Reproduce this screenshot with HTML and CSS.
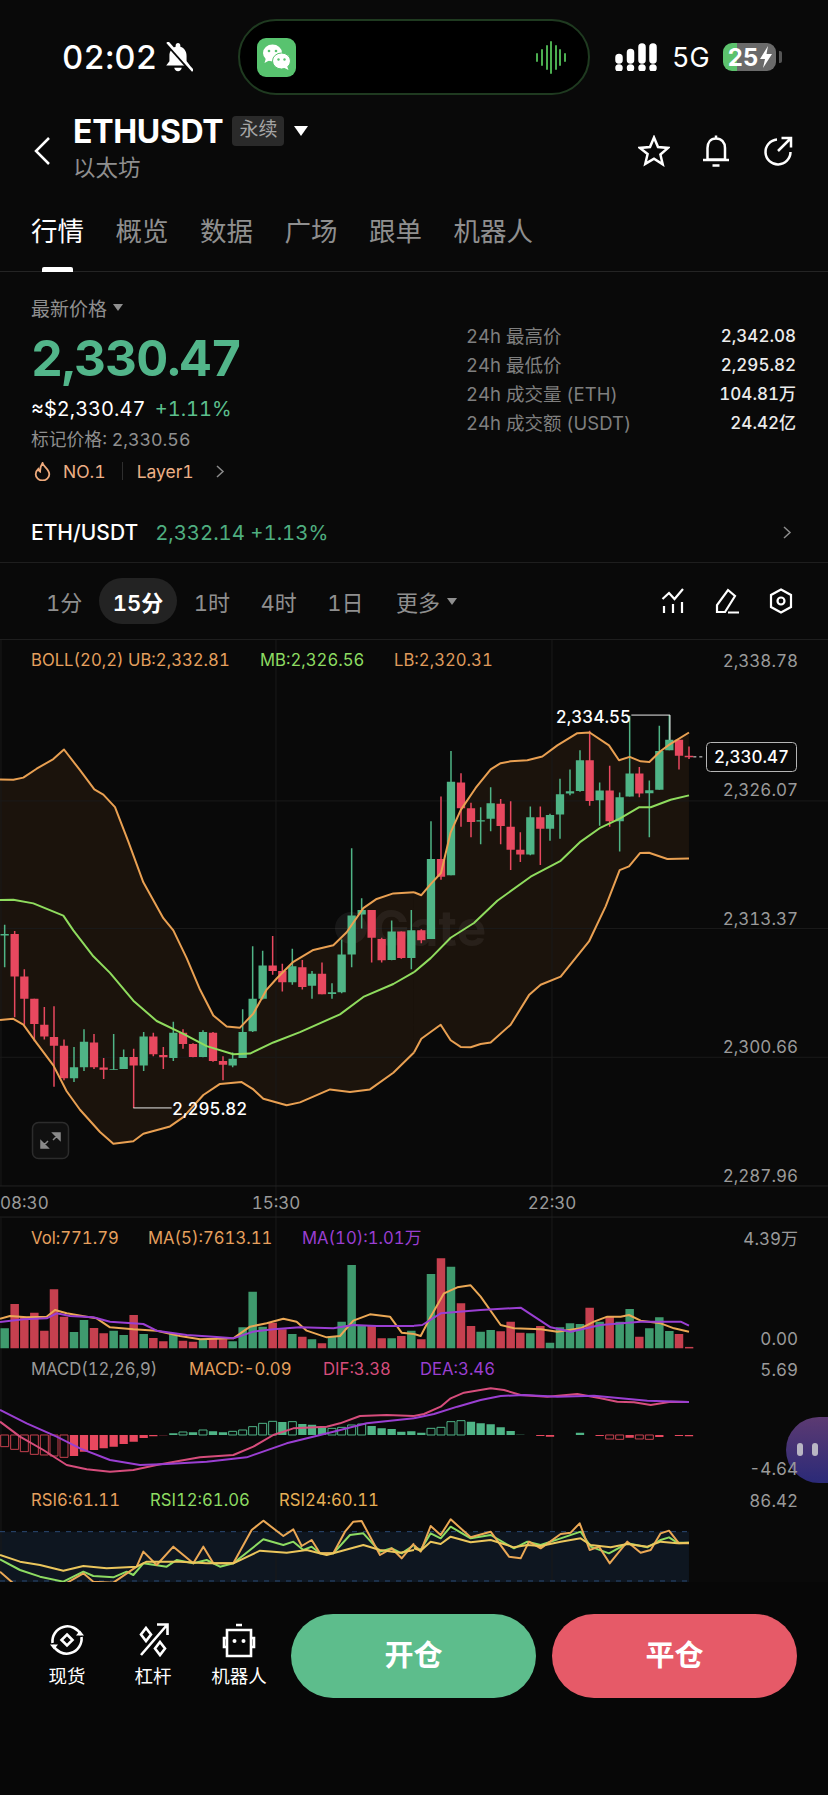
FILE: index.html
```html
<!DOCTYPE html>
<html lang="zh-CN">
<head>
    <meta charset="UTF-8">
    <meta name="viewport" content="width=device-width, initial-scale=1.0">
    <title>ETHUSDT</title>
    <link rel="stylesheet" href="styles.css">
</head>
<body>
    <div class="statusbar">
        <div class="sb-left">
            <span class="sb-time">02:02</span>
            <svg class="ic-mute" viewBox="0 0 28 28"><path class="fill-w" d="M14 1c-1.300 0-2.200.9-2.200 2.200v1.300C8 5.600 6 9 6 13v5l-3 4h22l-3-4v-5c0-4-2-7.400-5.800-8.500V3.200C16.200 1.900 15.300 1 14 1z"/><path class="fill-w" d="M10.500 24c.4 2 1.700 3.200 3.500 3.200s3.100-1.200 3.500-3.200z"/><path class="mute-cut" d="M3 1l24 27"/><path class="mute-line" d="M4 0l24 27"/></svg>
        </div>
        <div class="island">
            <svg class="ic-wechat" viewBox="0 0 39 39"><rect class="wx-bg" width="39" height="39" rx="9"/><ellipse class="fill-w" cx="15.500" cy="15" rx="9.500" ry="8.500"/><path class="fill-w" d="M9 20l-1.500 5 5.500-3z"/><ellipse class="wx-bg wx-ring" cx="24.500" cy="23" rx="9" ry="8"/><path class="fill-w" d="M30 28l1.500 4-5-2.500z"/><circle class="wx-eye" cx="12" cy="13" r="1.300"/><circle class="wx-eye" cx="19" cy="13" r="1.300"/><circle class="wx-eye" cx="21.500" cy="21.500" r="1.200"/><circle class="wx-eye" cx="27.500" cy="21.500" r="1.200"/></svg>
            <svg class="ic-voice" viewBox="0 0 30 33"><path class="voice" d="M1 13v7M6 9v15M11 5v23M15 1v31M20 5v23M24 9v15M29 13v7"/></svg>
        </div>
        <div class="sb-right">
            <svg class="ic-signal" viewBox="0 0 42 28"><path class="signal" d="M4 14.500v2.500M15.500 9.500v7.500M27 4v13M38 4v13M4 25v0M15.500 25v0M27 25v0M38 25v0"/></svg>
            <span class="sb-5g">5G</span>
            <div class="battery"><span>25</span><svg class="ic-bolt" viewBox="0 0 12 22"><path class="fill-w" d="M8 0L0 13h5l-2 9 9-14H6.500z"/></svg></div>
            <i class="battery-cap"></i>
        </div>
    </div>

    <div class="header">
        <svg class="ic-back" viewBox="0 0 16 28"><path class="line-w" d="M15 1L2 14l13 13"/></svg>
        <div class="title">
            <div class="title-row">
                <span class="symbol">ETHUSDT</span>
                <span class="badge">永续</span>
                <i class="caret"></i>
            </div>
            <div class="subname">以太坊</div>
        </div>
        <div class="header-icons">
            <svg class="ic-head" viewBox="0 0 32 32"><path class="line-w" d="M16 2.500l4 9.500 10 .9-7.600 6.600 2.300 9.800L16 23.600l-8.700 5.200 2.300-9.800L2 12.900l10-.9z"/></svg>
            <svg class="ic-head" viewBox="0 0 32 32"><path class="line-w" d="M16 3.500c-5.500 0-8.500 4-8.500 9.500v11.500H25V13c0-5.500-3.500-9.500-9-9.500zM16 .5v3M3 25h26M12.500 30.500h7"/></svg>
            <svg class="ic-head" viewBox="0 0 32 32"><path class="line-w" d="M15 4.500A12.500 12.500 0 1 0 28.500 17M16 16L28.500 3.500M19.500 3h9.500v9.500"/></svg>
        </div>
    </div>

    <div class="tabs">
        <span class="tab active">行情</span>
        <span class="tab">概览</span>
        <span class="tab">数据</span>
        <span class="tab">广场</span>
        <span class="tab">跟单</span>
        <span class="tab">机器人</span>
    </div>

    <div class="price-block">
        <div class="price-left">
            <div class="price-label">最新价格 <i class="caret-sm"></i></div>
            <div class="price-big">2,330.47</div>
            <div class="price-usd">≈$2,330.47 <span class="green">+1.11%</span></div>
            <div class="price-mark">标记价格: 2,330.56</div>
            <div class="price-tags">
                <svg class="ic-flame" viewBox="0 0 17 19"><path class="line-o" d="M8.500 1c.8 3.700 6.800 6.300 6.800 11.300a6.800 6.200 0 0 1-13.600 0c0-2.500 1.200-4.100 2.600-5.300.3 1.500.9 2.300 1.800 2.700C6 7 7 3.300 8.500 1z"/></svg>
                <span>NO.1</span>
                <i class="tag-sep"></i>
                <span>Layer1</span>
                <svg class="ic-more" viewBox="0 0 9 13"><path class="line-g" d="M1 1l6 5.500L1 12"/></svg>
            </div>
        </div>
        <div class="stats">
            <div class="stat"><span>24h 最高价</span><b>2,342.08</b></div>
            <div class="stat"><span>24h 最低价</span><b>2,295.82</b></div>
            <div class="stat"><span>24h 成交量 (ETH)</span><b>104.81万</b></div>
            <div class="stat"><span>24h 成交额 (USDT)</span><b>24.42亿</b></div>
        </div>
    </div>

    <div class="spot-row">
        <span class="spot-name">ETH/USDT</span>
        <span class="spot-val">2,332.14 +1.13%</span>
        <svg class="ic-more-r" viewBox="0 0 9 13"><path class="line-g" d="M1 1l6 5.500L1 12"/></svg>
    </div>

    <div class="toolbar">
        <span class="tf">1分</span>
        <span class="tf active">15分</span>
        <span class="tf">1时</span>
        <span class="tf">4时</span>
        <span class="tf">1日</span>
        <span class="tf tf-more">更多 <i class="caret-sm"></i></span>
        <div class="tool-icons">
            <svg class="ic-tool" viewBox="0 0 24 26"><path class="line-w2" d="M1.500 11L8 5l5.500 6L22 1M3 18v7M12 16v9M21 14v11"/></svg>
            <svg class="ic-tool" viewBox="0 0 24 26"><path class="line-w2" d="M2 24v-7L13 2l7 6-10 16zM13 24.500h11"/></svg>
            <svg class="ic-tool" viewBox="0 0 24 26"><path class="line-w2" d="M12 1.500l10 5.500v12l-10 5.500L2 19V7z"/><circle class="line-w2" cx="12" cy="13" r="3.500"/></svg>
        </div>
    </div>

    <svg class="chart-main" viewBox="0 0 828 578">
        <g transform="scale(.33333 .3699)">
            <polygon class="band" points="0,377 40,378 70,372 110,348 160,322 192,296 240,352 283,404 310,418 345,452 385,545 430,655 490,752 520,785 560,860 600,945 640,1015 680,1045 720,1048 760,1010 800,945 830,915 880,870 940,838 1000,825 1040,790 1090,725 1130,700 1180,685 1242,682 1242,1115 1180,1170 1110,1215 1050,1222 990,1215 900,1250 860,1258 790,1240 760,1215 725,1195 660,1200 610,1230 550,1290 510,1315 430,1335 400,1355 340,1362 300,1330 240,1270 200,1220 160,1150 110,1090 70,1040 40,1024 0,1027"/>
            <polygon class="band" transform="translate(1242 0)" points="0,682 22,690 50,660 81,630 110,520 140,460 185,400 230,350 260,333 290,328 340,325 385,315 430,285 490,252 527,250 585,285 615,325 647,316 680,328 706,330 740,300 766,283 825,250 825,591 760,592 705,575 678,576 645,612 617,622 575,720 525,815 440,910 380,932 345,960 290,1040 230,1088 200,1092 170,1101 140,1100 110,1082 80,1040 22,1078 0,1115"/>
            <path class="grid" d="M0 435H2484M0 780H2484M0 1128H2484M3 0V1476M828 0V1568M1656 0V1568"/>
            <path class="grid-strong" d="M0 1476H2484M0 1560H2484"/>
        </g>
        <circle class="watermark" cx="351" cy="288" r="16"/>
        <text class="watermark" x="372" y="306">Gate</text>
        <g transform="scale(.33333 .3699)">
            <path class="wick up" d="M14 770V885M222 1100V1195M252 1052V1165M341 1065V1162M371 1107V1160M431 1060V1165M520 1032V1138M609 1055V1128M698 1115V1155M728 998V1130M758 828V1060M788 840V972M877 835V932M936 895V970M996 928V970M1025 810V955M1055 563V885M1085 698V780M1175 758V866M1234 730V890"/>
            <path class="body up" d="M14 795V799M222 1155V1185M252 1086V1155M341 1160V1162M371 1127V1160M431 1072V1150M520 1062V1130M609 1060V1127M698 1132V1150M728 1060V1130M758 970V1058M788 880V970M877 882V925M936 902V935M996 952V957M1025 850V952M1055 745V850M1085 730V742M1175 788V865M1234 785V860"/>
            <path class="wick down" d="M44 787V1020M73 890V1040M103 970V1085M133 992V1080M162 990V1208M192 1080V1190M282 1065V1160M311 1130V1187M401 1105V1265M460 1062V1125M490 1100V1160M549 1052V1105M579 1090V1128M639 1060V1140M669 1125V1190M818 800V905M847 875V950M907 865V945M966 872V958M1115 730V872M1145 805V872M1204 788V862"/>
            <path class="body down" d="M44 795V910M73 910V970M103 970V1038M133 1040V1072M162 1073V1097M192 1097V1185M282 1088V1155M311 1156V1162M401 1127V1150M460 1072V1120M490 1122V1128M549 1062V1092M579 1092V1127M639 1062V1138M669 1138V1148M818 880V895M847 895V925M907 885V938M966 902V958M1115 730V805M1145 808V866M1204 788V860"/>
            <polyline class="ln boll" points="0,377 40,378 70,372 110,348 160,322 192,296 240,352 283,404 310,418 345,452 385,545 430,655 490,752 520,785 560,860 600,945 640,1015 680,1045 720,1048 760,1010 800,945 830,915 880,870 940,838 1000,825 1040,790 1090,725 1130,700 1180,685 1242,682"/>
            <polyline class="ln boll" points="0,1027 40,1024 70,1040 110,1090 160,1150 200,1220 240,1270 300,1330 340,1362 400,1355 430,1335 510,1315 550,1290 610,1230 660,1200 725,1195 760,1215 790,1240 860,1258 900,1250 990,1215 1050,1222 1110,1215 1180,1170 1242,1115"/>
            <polyline class="ln mb" points="0,703 40,702 100,712 190,745 220,785 280,855 330,900 400,975 470,1030 550,1065 620,1098 700,1120 750,1118 820,1088 900,1060 1020,1012 1090,965 1180,930 1242,898"/>
            <path class="mark" d="M400 1265H515"/>
            <g transform="translate(1242 0)">
                <path class="wick up" d="M51 490V808M111 300V636M200 452V552M230 398V517M349 450V582M408 470V543M438 375V537M468 350V420M498 298V410M557 385V502M617 412V572M647 205V423M706 380V533M736 232V405M766 203V298"/>
                <path class="body up" d="M51 592V808M111 383V636M200 487V491M230 441V483M349 479V580M408 473V510M438 417V472M468 409V415M498 325V408M557 407V433M617 425V490M647 361V423M706 406V414M736 300V405M766 270V298"/>
                <path class="wick down" d="M22 782V820M81 423V648M141 360V505M171 440V533M260 430V552M290 436V622M319 520V600M379 450V608M527 245V448M587 340V505M676 343V425M795 270V350M825 288V322"/>
                <path class="body down" d="M22 785V812M81 592V640M141 385V455M171 455V492M260 443V503M290 505V567M319 567V580M379 479V510M527 325V435M587 407V490M676 361V415M795 270V313"/>
                <path class="doji" d="M812 315H838"/>
                <polyline class="ln boll" points="0,682 22,690 50,660 81,630 110,520 140,460 185,400 230,350 260,333 290,328 340,325 385,315 430,285 490,252 527,250 585,285 615,325 647,316 680,328 706,330 740,300 766,283 825,250"/>
                <polyline class="ln boll" points="0,1115 22,1078 80,1040 110,1082 140,1100 170,1101 200,1092 230,1088 290,1040 345,960 380,932 440,910 525,815 575,720 617,622 645,612 678,576 705,575 760,592 825,591"/>
                <polyline class="ln mb" points="0,898 50,860 110,805 180,765 250,705 350,640 440,597 500,545 560,507 617,483 676,452 710,452 770,432 825,420"/>
                <path class="mark" d="M652 203H768V270"/>
                <path class="mark dash" d="M838 316H872"/>
            </g>
        </g>
        <text class="lg c-boll" x="31" y="26">BOLL(20,2) UB:2,332.81</text>
        <text class="lg c-mb" x="260" y="26">MB:2,326.56</text>
        <text class="lg c-lb" x="394" y="26">LB:2,320.31</text>
        <text class="ax" x="798" y="26.500">2,338.78</text>
        <text class="ax" x="798" y="155.500">2,326.07</text>
        <text class="ax" x="798" y="284.500">2,313.37</text>
        <text class="ax" x="798" y="412.500">2,300.66</text>
        <text class="ax" x="798" y="541.500">2,287.96</text>
        <text class="tm tm-start" x="0" y="568.500">08:30</text>
        <text class="tm" x="276" y="568.500">15:30</text>
        <text class="tm" x="552" y="568.500">22:30</text>
        <text class="hilo hilo-end" x="631" y="82.500">2,334.55</text>
        <text class="hilo" x="172" y="474.500">2,295.82</text>
        <rect class="pricebox" x="706.500" y="102.500" width="90" height="29" rx="4"/>
        <text class="hilo hilo-mid" x="751.500" y="123">2,330.47</text>
        <rect class="expand" x="32.500" y="482.500" width="36" height="36" rx="6"/>
        <path class="expand-ic" d="M43 506l5-5M58 495l-5 5M41 508v-7l7 7zM60 493v7l-7-7z"/>
    </svg>

    <svg class="chart-sub" viewBox="0 0 828 364">
        <defs>
            <linearGradient id="bubble" x1="0" y1="0" x2="0" y2="1">
                <stop offset="0" stop-color="#5c3a72"/>
                <stop offset="1" stop-color="#2b2a78"/>
            </linearGradient>
        </defs>
        <g transform="scale(.33333) translate(0 -24)">
            <rect class="rsi-bg" x="0" y="965" width="2067" height="151"/>
            <path class="grid" d="M3 24V1116M828 24V1116M1656 24V1116"/>
            <path class="rsi-dash" d="M0 965H2067M0 1113H2067"/>
            <path class="vol up-d" d="M14 415V355M222 415V366M252 415V330M341 415V362M371 415V375M431 415V372M520 415V370M609 415V388M698 415V394M728 415V352M758 415V245M788 415V350M877 415V372M936 415V388M996 415V380M1025 415V335M1055 415V165M1085 415V345M1175 415V385M1234 415V362"/>
            <path class="vol down-d" d="M44 415V282M73 415V320M103 415V308M133 415V362M162 415V238M192 415V320M282 415V354M311 415V370M401 415V315M460 415V384M490 415V394M549 415V392M579 415V395M639 415V385M669 415V388M818 415V338M847 415V358M907 415V380M966 415V400M1115 415V348M1145 415V385M1204 415V378"/>
            <polyline class="ln c2-o" points="0,326 30,318 80,322 140,320 165,300 200,310 260,320 290,325 330,352 400,358 470,362 540,378 600,388 700,385 750,350 800,340 850,326 890,335 920,362 980,382 1020,378 1060,332 1110,313 1170,320 1205,368 1242,372"/>
            <polyline class="ln c2-p" points="0,336 70,328 140,325 170,310 210,318 280,322 330,335 430,342 470,362 560,375 640,380 700,385 760,365 820,358 900,352 1000,355 1060,345 1130,348 1242,348"/>
            <path class="bar up" d="M520 675V670M579 675V667M639 675V664M669 675V667M847 675V636M907 675V642M936 675V644M966 675V652M1115 675V648M1145 675V655M1175 675V657M1204 675V665M1234 675V664"/>
            <path class="bar down" d="M222 675V738M252 675V725M282 675V720M311 675V715M341 675V710M371 675V702M401 675V695M431 675V684M460 675V679M490 675V676"/>
            <path class="hollow h-down" d="M2 675h24v35h-24zM32 675h24v43h-24zM61 675h24v50h-24zM91 675h24v58h-24zM121 675h24v60h-24zM150 675h24v63h-24zM180 675h24v67h-24z"/>
            <path class="hollow h-up" d="M537 675h24v-9h-24zM597 675h24v-15h-24zM686 675h24v-11h-24zM716 675h24v-15h-24zM746 675h24v-25h-24zM776 675h24v-35h-24zM806 675h24v-41h-24zM865 675h24v-40h-24zM984 675h24v-20h-24zM1013 675h24v-23h-24zM1043 675h24v-30h-24zM1073 675h24v-33h-24z"/>
            <polyline class="ln c-dif" points="0,635 60,680 130,720 200,765 260,778 330,785 400,780 470,765 540,752 600,742 700,735 760,710 820,675 880,655 980,650 1020,640 1080,618 1160,615 1242,618"/>
            <polyline class="ln c2-p" points="0,600 80,640 170,680 240,715 330,750 420,765 500,762 620,755 740,742 860,700 1000,665 1100,640 1242,625"/>
            <polyline class="ln c-r12" points="0,1048 60,1080 120,1100 190,1115 250,1085 280,1098 340,1102 380,1085 400,1095 430,1060 500,1070 530,1050 580,1060 620,1050 660,1070 700,1060 790,988 850,1005 880,995 910,1020 935,1010 960,1030 1000,1030 1050,975 1090,970 1140,1025 1175,1015 1205,1030 1242,1005"/>
            <polyline class="ln c2-o" points="0,1085 40,1120 120,1125 190,1125 250,1090 280,1115 340,1118 410,1070 430,1025 470,1065 520,1010 580,1060 610,1010 640,1060 700,1060 755,960 790,932 850,978 880,958 905,1008 935,990 960,1030 1000,1030 1035,965 1060,935 1085,933 1140,1035 1175,1015 1205,1045 1242,1000"/>
            <polyline class="ln c-r24" points="0,1035 60,1055 120,1065 190,1082 250,1068 320,1075 410,1070 440,1055 540,1055 620,1060 700,1060 780,1022 860,1028 920,1020 980,1035 1090,1005 1140,1020 1200,1028 1242,1020"/>
            <g transform="translate(1242 0)">
                <path class="vol up-d" d="M51 415V192M111 415V170M200 415V365M230 415V360M349 415V370M408 415V398M438 415V352M468 415V340M498 415V342M557 415V335M617 415V335M647 415V297M706 415V355M736 415V322M766 415V363"/>
                <path class="vol down-d" d="M22 415V388M81 415V145M141 415V280M171 415V348M260 415V364M290 415V335M319 415V368M379 415V348M527 415V293M587 415V320M676 415V380M795 415V372"/>
                <path class="thin-r" d="M813 413H838"/>
                <polyline class="ln c2-o" points="0,372 20,378 50,320 90,250 130,232 170,226 200,260 260,345 300,355 380,358 430,365 500,355 540,335 580,320 620,320 645,315 680,332 740,340 780,355 825,365"/>
                <polyline class="ln c2-p" points="0,347 25,345 80,310 200,300 320,293 410,352 470,365 560,345 680,335 800,335 825,347"/>
                <path class="bar up" d="M171 675V635M200 675V640M230 675V643M260 675V652M290 675V663M22 675V668M319 675V674M498 675V668"/>
                <path class="bar down" d="M379 675V678M408 675V680M557 675V678M647 675V683M736 675V681M795 675V678M825 675V679"/>
                <path class="hollow h-up" d="M39 675h24v-20h-24zM69 675h24v-23h-24zM99 675h24v-40h-24zM129 675h24v-43h-24z"/>
                <path class="hollow h-down" d="M575 675h24v12h-24zM605 675h24v13h-24zM664 675h24v12h-24zM694 675h24v13h-24z"/>
                <polyline class="ln c-dif" points="0,618 30,612 80,590 110,565 150,548 230,535 270,540 320,555 400,560 490,552 560,565 610,575 660,577 710,585 770,575 825,576"/>
                <polyline class="ln c2-p" points="0,625 60,612 130,590 200,570 260,558 330,555 430,560 540,557 620,565 700,572 825,576"/>
                <polyline class="ln c-r12" points="0,1010 20,1020 50,970 80,985 110,950 170,985 230,975 300,1015 340,995 380,1005 440,985 500,965 530,1010 585,1030 640,1000 700,1012 740,990 765,982 790,998 825,998"/>
                <polyline class="ln c2-o" points="0,1005 20,1025 50,948 80,975 110,928 170,982 230,965 285,1040 320,1045 345,995 380,1015 440,972 470,968 497,940 527,1020 555,1010 587,1060 640,995 680,1028 710,1020 740,970 765,962 795,1000 825,1000"/>
                <polyline class="ln c-r24" points="0,1015 20,1022 50,995 80,1002 110,980 170,997 230,990 300,1012 340,1005 380,1008 440,995 500,985 530,1005 590,1012 640,1002 700,1010 740,995 790,1000 825,998"/>
            </g>
        </g>
        <path class="bubble" d="M828 199h-9a33 33 0 0 0 0 66h9z"/>
        <rect class="bubble-dot" x="797" y="225" width="6" height="13" rx="3"/>
        <rect class="bubble-dot" x="812" y="225" width="6" height="13" rx="3"/>
        <text class="lg c-boll" x="31" y="25.500">Vol:771.79</text>
        <text class="lg c-boll" x="148" y="25.500">MA(5):7613.11</text>
        <text class="lg c-p" x="302" y="25.500">MA(10):1.01万</text>
        <text class="lg c-grey" x="31" y="156.500">MACD(12,26,9)</text>
        <text class="lg c-boll" x="189" y="156.500">MACD:-0.09</text>
        <text class="lg c-pink" x="323" y="156.500">DIF:3.38</text>
        <text class="lg c-p" x="420" y="156.500">DEA:3.46</text>
        <text class="lg c-boll" x="31" y="287.500">RSI6:61.11</text>
        <text class="lg c-mb" x="150" y="287.500">RSI12:61.06</text>
        <text class="lg c-y" x="279" y="287.500">RSI24:60.11</text>
        <text class="ax" x="798" y="26.500">4.39万</text>
        <text class="ax" x="798" y="126.500">0.00</text>
        <text class="ax" x="798" y="157.500">5.69</text>
        <text class="ax" x="798" y="256.500">-4.64</text>
        <text class="ax" x="798" y="288.500">86.42</text>
    </svg>

    <div class="bottom">
        <div class="nav-item">
            <svg class="ic-nav" viewBox="0 0 36 36"><path class="line-w3" d="M3.500 21A15 15 0 0 1 32 13M32.500 15A15 15 0 0 1 4 23"/><path class="fill-w" d="M27 13.500h8l-4-5zM9 22.500H1l4 5z"/><path class="line-w3" d="M18 12.500l5.500 5.500-5.500 5.500-5.500-5.500z"/></svg>
            <span>现货</span>
        </div>
        <div class="nav-item">
            <svg class="ic-nav" viewBox="0 0 36 36"><path class="line-w3" d="M6 33L32 3M22 2.500h10.500v10.500M11 6l5 6.500-5 6.500-5-6.500zM25 20l5 6.500-5 6.500-5-6.500z"/></svg>
            <span>杠杆</span>
        </div>
        <div class="nav-item">
            <svg class="ic-nav" viewBox="0 0 36 36"><path class="line-w3" d="M6 8h24v26H6zM15 3h6M6 16H3v9h3M30 16h3v9h-3"/><circle class="fill-w" cx="13.500" cy="19" r="2"/><circle class="fill-w" cx="22.500" cy="19" r="2"/></svg>
            <span>机器人</span>
        </div>
        <div class="trade-btn open">开仓</div>
        <div class="trade-btn close">平仓</div>
    </div>
</body>
</html>
```

FILE: styles.css
```css
* {
    box-sizing: border-box;
}
body {
    margin: 0;
    width: 828px;
    height: 1795px;
    overflow: hidden;
    background: #090909;
    color: #fff;
    font-family: Inter, "Noto Sans CJK SC", sans-serif;
    font-variant-numeric: tabular-nums;
}
svg {
    display: block;
    flex: none;
}
i {
    display: block;
    flex: none;
}

/* status bar */
.statusbar {
    display: flex;
    align-items: center;
    height: 100px;
    padding-top: 19px;
    padding-bottom: 5px;
}
.sb-left {
    display: flex;
    align-items: center;
    gap: 6px;
    width: 238px;
    padding-left: 62px;
}
.sb-time {
    font-size: 33px;
    font-weight: 500;
    letter-spacing: .2px;
}
.ic-mute {
    width: 30px;
    height: 30px;
}
.mute-cut {
    fill: none;
    stroke: #090909;
    stroke-width: 3;
}
.mute-line {
    fill: none;
    stroke: #fff;
    stroke-width: 2.500;
}
.island {
    display: flex;
    align-items: center;
    justify-content: space-between;
    width: 352px;
    height: 76px;
    padding: 0 22px 0 17px;
    background: #000;
    border: 2px solid #1f3a20;
    border-radius: 38px;
}
.ic-wechat {
    width: 39px;
    height: 39px;
}
.wx-bg {
    fill: #58c36f;
}
.wx-ring {
    stroke: #58c36f;
    stroke-width: 1;
    fill: #fff;
}
.wx-eye {
    fill: #58c36f;
}
.ic-voice {
    width: 30px;
    height: 33px;
}
.voice {
    fill: none;
    stroke: #4cae50;
    stroke-width: 2;
    stroke-linecap: round;
}
.sb-right {
    display: flex;
    align-items: center;
    margin-left: 25px;
}
.ic-signal {
    width: 42px;
    height: 28px;
    margin-right: 15px;
}
.signal {
    fill: none;
    stroke: #fff;
    stroke-width: 7.500;
    stroke-linecap: round;
}
.sb-5g {
    width: 36px;
    margin-right: 15px;
    font-size: 27px;
    font-weight: 400;
}
.battery {
    display: flex;
    align-items: center;
    justify-content: center;
    gap: 1px;
    width: 53px;
    height: 28px;
    background: linear-gradient(90deg, #5cc26d 27%, #6a6a6a 27%);
    border-radius: 9px;
    font-size: 24px;
    font-weight: 700;
}
.ic-bolt {
    width: 12px;
    height: 22px;
}
.battery-cap {
    width: 3px;
    height: 12px;
    margin-left: 3px;
    background: #555;
    border-radius: 0 2px 2px 0;
}
.fill-w {
    fill: #fff;
}
.line-w {
    fill: none;
    stroke: #fff;
    stroke-width: 2.500;
}
.line-w2 {
    fill: none;
    stroke: #fff;
    stroke-width: 2.200;
}
.line-w3 {
    fill: none;
    stroke: #fff;
    stroke-width: 2.600;
}
.line-o {
    fill: none;
    stroke: #eeaa7c;
    stroke-width: 1.800;
}
.line-g {
    fill: none;
    stroke: #8c8c8c;
    stroke-width: 1.500;
}

/* header */
.header {
    display: flex;
    align-items: flex-start;
    height: 90px;
    padding: 16px 34px 0 34px;
}
.ic-back {
    width: 16px;
    height: 28px;
    margin-top: 21px;
}
.title {
    margin-left: 23px;
}
.title-row {
    display: flex;
    align-items: center;
    height: 30px;
}
.symbol {
    font-size: 32px;
    font-weight: 700;
    letter-spacing: -.3px;
}
.badge {
    margin-left: 9px;
    padding: 0 7px;
    height: 30px;
    line-height: 28px;
    background: #2a2a2a;
    border-radius: 4px;
    color: #a5a5a5;
    font-size: 19px;
}
.caret {
    width: 0;
    height: 0;
    margin-left: 10px;
    border-left: 7px solid transparent;
    border-right: 7px solid transparent;
    border-top: 10px solid #fff;
}
.subname {
    margin-top: 10px;
    color: #8f8f8f;
    font-size: 22.500px;
    line-height: 24px;
}
.header-icons {
    display: flex;
    gap: 30px;
    margin-left: auto;
    margin-top: 19px;
}
.ic-head {
    width: 32px;
    height: 32px;
}

/* tabs */
.tabs {
    display: flex;
    gap: 31.500px;
    height: 82px;
    padding: 0 31px;
    border-bottom: 1px solid #242424;
}
.tab {
    position: relative;
    padding-top: 26px;
    color: #8f8f8f;
    font-size: 26.500px;
    line-height: 30px;
}
.tab.active {
    color: #fff;
}
.tab.active::after {
    content: "";
    position: absolute;
    left: 11px;
    right: 11px;
    bottom: -1px;
    height: 5px;
    background: #fff;
    border-radius: 2px 2px 0 0;
}

/* price block */
.price-block {
    display: flex;
    height: 230px;
    padding: 0 32px 0 31px;
}
.price-left {
    padding-top: 25px;
}
.price-label {
    display: flex;
    align-items: center;
    gap: 6px;
    height: 20px;
    color: #8f8f8f;
    font-size: 19px;
}
.caret-sm {
    width: 0;
    height: 0;
    border-left: 5px solid transparent;
    border-right: 5px solid transparent;
    border-top: 7px solid #8f8f8f;
}
.price-big {
    height: 50px;
    margin-top: 16px;
    color: #52b58a;
    font-size: 49.500px;
    font-weight: 700;
    line-height: 50px;
    letter-spacing: -1px;
}
.price-usd {
    height: 24px;
    margin-top: 14px;
    font-size: 20px;
    line-height: 24px;
}
.green {
    margin-left: 4px;
    color: #5cbf8d;
}
.price-mark {
    height: 22px;
    margin-top: 8px;
    color: #8f8f8f;
    font-size: 17.800px;
    line-height: 22px;
}
.price-tags {
    display: flex;
    align-items: center;
    height: 22px;
    margin-top: 9px;
    color: #eeb086;
    font-size: 17.500px;
}
.ic-flame {
    width: 17px;
    height: 19px;
    margin: 0 12px 0 3px;
}
.tag-sep {
    width: 1px;
    height: 18px;
    margin: 0 14px 0 16px;
    background: #2e2e2e;
}
.ic-more {
    width: 9px;
    height: 13px;
    margin-left: 22px;
}
.stats {
    width: 330px;
    margin-left: auto;
    padding-top: 50px;
}
.stat {
    display: flex;
    justify-content: space-between;
    height: 29px;
    color: #7f7f7f;
    font-size: 18.500px;
    line-height: 29px;
}
.stat b {
    color: #ececec;
    font-size: 17px;
    font-weight: 500;
}

/* spot row */
.spot-row {
    display: flex;
    align-items: center;
    height: 61px;
    padding: 0 36px 0 31px;
    border-bottom: 1px solid #1e1e1e;
    font-size: 21px;
}
.spot-name {
    font-weight: 500;
}
.spot-val {
    margin-left: 17px;
    color: #4fae80;
    font-size: 20.300px;
}
.ic-more-r {
    width: 9px;
    height: 13px;
    margin-left: auto;
}

/* timeframe toolbar */
.toolbar {
    display: flex;
    align-items: center;
    gap: 2.500px;
    height: 77px;
    padding: 0 35px 0 32px;
    border-bottom: 1px solid #1e1e1e;
}
.tf {
    display: flex;
    align-items: center;
    gap: 7px;
    height: 46px;
    padding: 0 14px;
    color: #8f8f8f;
    font-size: 22px;
    border-radius: 23px;
}
.tf.active {
    background: #232323;
    color: #fff;
    font-weight: 600;
}
.tf-more {
    margin-left: 2px;
}
.tool-icons {
    display: flex;
    gap: 30px;
    margin-left: auto;
}
.ic-tool {
    width: 24px;
    height: 26px;
}

/* charts */
.chart-main {
    width: 828px;
    height: 578px;
}
.chart-sub {
    width: 828px;
    height: 364px;
}
.band {
    fill: #1b130c;
}
.grid {
    fill: none;
    stroke: #1a1a1a;
    stroke-width: 1;
    vector-effect: non-scaling-stroke;
}
.grid-strong {
    fill: none;
    stroke: #222;
    stroke-width: 1;
    vector-effect: non-scaling-stroke;
}
.watermark {
    fill: rgba(255, 255, 255, .06);
    font-size: 50px;
    font-weight: 700;
}
.wick, .body, .vol, .bar, .ln, .mark, .hollow, .doji, .thin-r {
    fill: none;
    vector-effect: non-scaling-stroke;
}
.wick {
    stroke-width: 1.500;
}
.body {
    stroke-width: 8.300;
}
.up {
    stroke: #4fb486;
}
.down {
    stroke: #e8485f;
}
.doji {
    stroke: #e8485f;
    stroke-width: 1.500;
}
.ln {
    stroke-width: 2;
    stroke-linejoin: round;
}
.boll {
    stroke: #e9a052;
}
.mb {
    stroke: #8fdc5e;
}
.mark {
    stroke: #e8e8e8;
    stroke-width: 1;
}
.dash {
    stroke-dasharray: 3 3;
}
.lg {
    font-size: 16.700px;
}
.c-boll {
    fill: #e5a05e;
}
.c-mb {
    fill: #8ddc62;
}
.c-lb {
    fill: #df9a5c;
}
.c-p {
    fill: #9a3fd2;
}
.c-grey {
    fill: #9a9a9a;
}
.c-pink {
    fill: #d64d7c;
}
.c-y {
    fill: #e6b055;
}
.ax {
    fill: #9a9a9a;
    font-size: 17px;
    text-anchor: end;
}
.tm {
    fill: #9a9a9a;
    font-size: 17px;
    text-anchor: middle;
}
.tm-start {
    text-anchor: start;
}
.hilo {
    fill: #fff;
    font-size: 17px;
    font-weight: 500;
}
.hilo-end {
    text-anchor: end;
}
.hilo-mid {
    text-anchor: middle;
}
.pricebox {
    fill: #090909;
    stroke: #b5b5b5;
    stroke-width: 1;
}
.expand {
    fill: #101010;
    stroke: #2c2c2c;
    stroke-width: 1.500;
}
.expand-ic {
    fill: #8a8a8a;
    stroke: #8a8a8a;
    stroke-width: 1.500;
}

/* lower panels */
.vol {
    stroke-width: 8.500;
}
.up-d {
    stroke: #3f9a6e;
}
.down-d {
    stroke: #c6404f;
}
.thin-r {
    stroke: #c6404f;
    stroke-width: 1.500;
}
.bar {
    stroke-width: 8.300;
}
.hollow {
    stroke-width: 1;
}
.h-up {
    stroke: #4fb486;
}
.h-down {
    stroke: #c6404f;
}
.c2-o {
    stroke: #eba855;
}
.c2-p {
    stroke: #9a3fd2;
}
.c-dif {
    stroke: #d64d7c;
}
.c-r12 {
    stroke: #8ddc62;
}
.c-r24 {
    stroke: #ebc65c;
}
.rsi-bg {
    fill: #0e1620;
}
.rsi-dash {
    fill: none;
    stroke: #2b4a73;
    stroke-width: 1;
    stroke-dasharray: 5 6;
    vector-effect: non-scaling-stroke;
}
.bubble {
    fill: url(#bubble);
}
.bubble-dot {
    fill: #b9b6c4;
}

/* bottom actions */
.bottom {
    display: flex;
    align-items: flex-start;
    height: 213px;
    padding: 32px 31px 0 24px;
    background: #070707;
}
.nav-item {
    display: flex;
    flex-direction: column;
    align-items: center;
    gap: 8px;
    width: 86px;
    padding-top: 8px;
    font-size: 18.500px;
    line-height: 20px;
}
.ic-nav {
    width: 36px;
    height: 36px;
}
.trade-btn {
    width: 245px;
    height: 84px;
    border-radius: 42px;
    color: #fff;
    font-size: 29px;
    font-weight: 700;
    line-height: 84px;
    text-align: center;
}
.open {
    margin-left: 9px;
    background: #5dbd8c;
}
.close {
    margin-left: 16px;
    background: #e65a68;
}
```
